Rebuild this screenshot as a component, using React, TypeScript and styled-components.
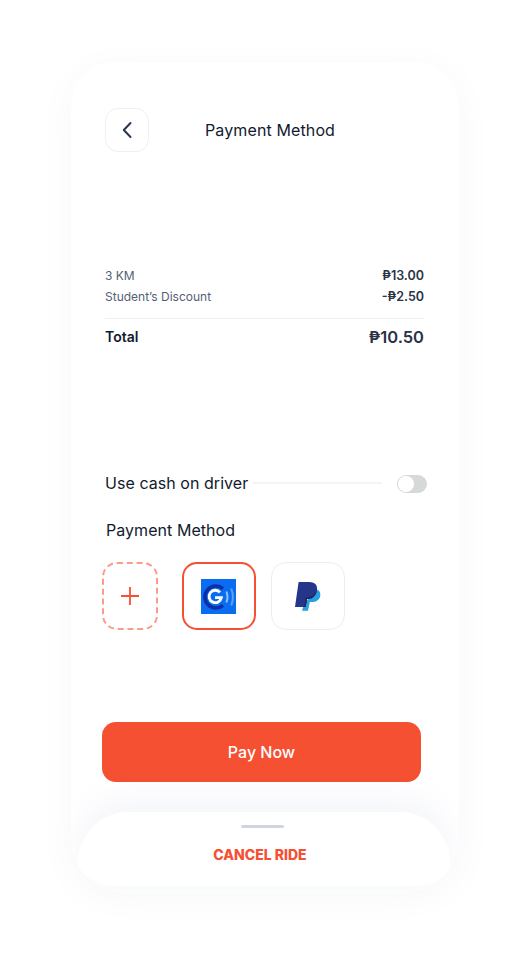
import React from 'react';
import styled, { createGlobalStyle } from 'styled-components';

const GlobalStyle = createGlobalStyle`
  html, body {
    margin: 0;
    padding: 0;
    background: #fff;
    font-family: Inter, "Noto Sans", sans-serif;
  }
`;

const Page = styled.div`
  width: 519px;
  height: 956px;
  padding: 62px 0 0 71px;
  box-sizing: border-box;
  overflow: hidden;
`;

const Phone = styled.div`
  width: 388px;
  height: 824px;
  border-radius: 44px;
  background: #fff;
  box-shadow: 0 8px 40px rgba(40, 50, 90, 0.035);
  display: flex;
  flex-direction: column;
  overflow: hidden;
`;

const Header = styled.div`
  display: flex;
  align-items: center;
  height: 44px;
  margin: 46px 0 0 34px;
`;

const BackButton = styled.button`
  width: 44px;
  height: 44px;
  padding: 0;
  box-sizing: border-box;
  border: 1.5px solid #eeeff5;
  border-radius: 13px;
  background: #fff;
  display: flex;
  align-items: center;
  justify-content: center;
  color: #2b3550;
`;

const Title = styled.h1`
  margin: 0 0 0 56px;
  font-size: 16px;
  font-weight: 400;
  letter-spacing: 0.12px;
  line-height: 20px;
  color: #111a2e;
`;

const Summary = styled.div`
  margin: 113px 35px 0 34px;
`;

const Row = styled.div`
  display: flex;
  justify-content: space-between;
  align-items: center;
  height: 21px;
`;

const RowLabel = styled.span`
  font-size: 12px;
  color: #555e75;
`;

const RowValue = styled.span`
  font-size: 12.5px;
  font-weight: 600;
  color: #2a3246;
`;

const Divider = styled.div`
  height: 1px;
  margin: 11px 0 7px;
  background: #f0f1f5;
`;

const TotalLabel = styled.span`
  font-size: 14px;
  font-weight: 600;
  color: #111a2e;
`;

const TotalValue = styled.span`
  font-size: 16.5px;
  font-weight: 600;
  color: #2a3246;
`;

const CashRow = styled.div`
  display: flex;
  align-items: center;
  height: 20px;
  margin: 126px 32px 0 34px;
`;

const SectionLabel = styled.span`
  font-size: 16px;
  font-weight: 400;
  letter-spacing: 0.05px;
  line-height: 20px;
  color: #111a2e;
  white-space: nowrap;
`;

const CashLine = styled.div`
  flex: 1;
  height: 2px;
  margin: 0 15px 0 5px;
  background: #f3f4f6;
`;

const Toggle = styled.div`
  width: 30px;
  height: 18px;
  margin-top: 2px;
  border-radius: 9px;
  background: #d6dad6;
  display: flex;
  align-items: center;
  padding-left: 1px;
  box-sizing: border-box;
`;

const ToggleKnob = styled.div`
  width: 16px;
  height: 16px;
  border-radius: 50%;
  background: #fff;
`;

const MethodHeading = styled.div`
  margin: 27px 0 0 35px;
`;

const Methods = styled.div`
  display: flex;
  align-items: center;
  margin: 22px 0 0 31px;
`;

const Tile = styled.div<{ $variant: 'add' | 'active' | 'plain'; $width: number }>`
  width: ${p => p.$width}px;
  height: 68px;
  box-sizing: border-box;
  border-radius: 15px;
  display: flex;
  align-items: center;
  justify-content: center;
  background: #fff;
  border: ${p =>
    p.$variant === 'add'
      ? '2px dashed #fa9c88'
      : p.$variant === 'active'
        ? '2px solid #f55032'
        : '1.5px solid #ededf0'};
  margin-right: ${p => (p.$variant === 'add' ? 24 : p.$variant === 'active' ? 15 : 0)}px;
  padding-right: ${p => (p.$variant === 'active' ? 1 : 0)}px;
`;

const PayButton = styled.button`
  width: 319px;
  height: 60px;
  margin: 92px 0 0 31px;
  border: 0;
  border-radius: 14px;
  background: #f55032;
  color: #fff;
  font-family: inherit;
  font-size: 16px;
  font-weight: 500;
  padding: 0;
`;

const Sheet = styled.div`
  width: 372px;
  height: 74px;
  margin: 30px 0 0 7px;
  border-radius: 50px 50px 0 0;
  background: #fff;
  box-shadow: 0 -14px 30px rgba(110, 130, 200, 0.07);
  display: flex;
  flex-direction: column;
  align-items: center;
  box-sizing: border-box;
  padding-top: 13px;
`;

const Handle = styled.div`
  width: 43px;
  height: 3px;
  margin-right: 3px;
  border-radius: 2px;
  background: #cfd5df;
`;

const CancelText = styled.span`
  margin: 17px 8px 0 0;
  font-size: 14px;
  font-weight: 800;
  line-height: 20px;
  color: #f55032;
`;

const GCashLogo = () => (
  <svg width="35" height="35" viewBox="0 0 35 35">
    <rect width="35" height="35" fill="#0a6cf0" />
    <path d="M22 26.4A11 11 0 1 1 22 9.6" fill="none" stroke="#0b2fa8" strokeWidth="3.6" />
    <path d="M19 13.4A6.2 6.2 0 1 0 20.4 18.6H14" fill="none" stroke="#fff" strokeWidth="2.8" />
    <path d="M25.4 12.5Q27.6 18 25.4 23.5" fill="none" stroke="#8cc4fb" strokeWidth="2" />
    <path d="M30.2 9.5Q33.6 18 30.2 26.5" fill="none" stroke="#5aa4f7" strokeWidth="2" />
  </svg>
);

const PayPalLogo = () => (
  <svg width="26" height="29" viewBox="0 0 26 29">
    <path
      d="M21.8 7.5C24.8 8.5 25.8 11 25.2 14.2C24.4 18 21 20 17 20H14.8L13 28.8H7L9 22Z"
      fill="#27a0e0"
    />
    <path
      d="M3.6 0H14C19.8 0 22.6 2.8 22 8C21.2 13.6 17.6 17 12.6 17H12.2L10.6 25H0Z"
      fill="#25358a"
    />
    <path
      d="M22 8C21.2 13.6 17.6 17 12.6 17H12.2L10.6 25H9.2L11 15.4C16 15.4 20.4 12.6 22 8Z"
      fill="#1f2560"
    />
  </svg>
);

export default function App() {
  return (
    <Page>
      <GlobalStyle />
      <Phone>
        <Header>
          <BackButton aria-label="Back">
            <svg width="12" height="18" viewBox="0 0 12 18" fill="none">
              <path d="M9.5 2L2.8 9l6.7 7" stroke="currentColor" strokeWidth="2" strokeLinecap="round" strokeLinejoin="round" />
            </svg>
          </BackButton>
          <Title>Payment Method</Title>
        </Header>

        <Summary>
          <Row>
            <RowLabel>3 KM</RowLabel>
            <RowValue>₱13.00</RowValue>
          </Row>
          <Row>
            <RowLabel>Student’s Discount</RowLabel>
            <RowValue>-₱2.50</RowValue>
          </Row>
          <Divider />
          <Row>
            <TotalLabel>Total</TotalLabel>
            <TotalValue>₱10.50</TotalValue>
          </Row>
        </Summary>

        <CashRow>
          <SectionLabel>Use cash on driver</SectionLabel>
          <CashLine />
          <Toggle>
            <ToggleKnob />
          </Toggle>
        </CashRow>

        <MethodHeading>
          <SectionLabel>Payment Method</SectionLabel>
        </MethodHeading>

        <Methods>
          <Tile $variant="add" $width={56}>
            <svg width="18" height="18" viewBox="0 0 18 18">
              <path d="M9 0v18M0 9h18" stroke="#f55032" strokeWidth="1.8" />
            </svg>
          </Tile>
          <Tile $variant="active" $width={74}>
            <GCashLogo />
          </Tile>
          <Tile $variant="plain" $width={74}>
            <PayPalLogo />
          </Tile>
        </Methods>

        <PayButton>Pay Now</PayButton>

        <Sheet>
          <Handle />
          <CancelText>CANCEL RIDE</CancelText>
        </Sheet>
      </Phone>
    </Page>
  );
}
